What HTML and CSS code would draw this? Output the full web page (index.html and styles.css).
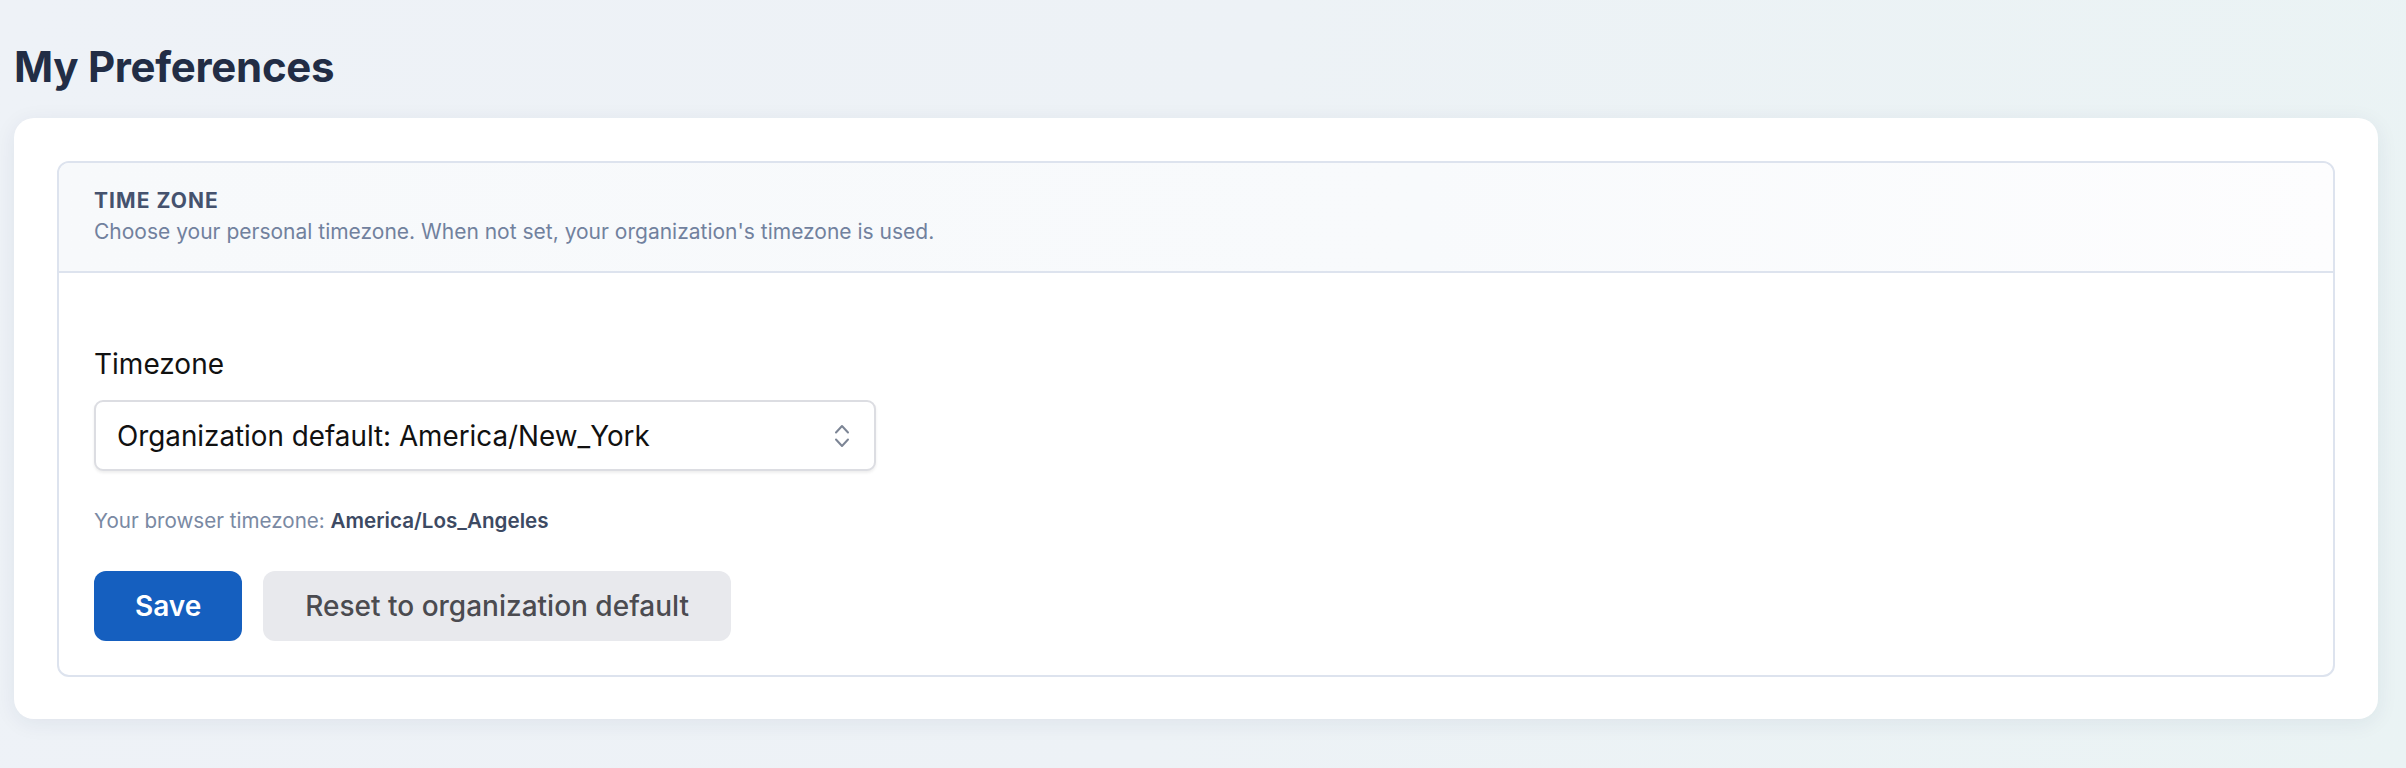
FILE: index.html
```html
<!DOCTYPE html>
<html lang="en">
<head>
	<meta charset="UTF-8">
	<title>My Preferences</title>
	<link rel="stylesheet" href="styles.css">
</head>
<body>
	<div class="page">
		<h1 class="page-title">My Preferences</h1>
		<div class="card">
			<div class="section">
				<div class="section-head">
					<h2 class="section-title">TIME ZONE</h2>
					<p class="section-desc">Choose your personal timezone. When not set, your organization's timezone is used.</p>
				</div>
				<div class="section-body">
					<label class="field-label" for="tz">Timezone</label>
					<div class="select" id="tz">
						<span class="select-value">Organization default: America/New_York</span>
						<svg class="select-arrows" width="16" height="26" viewBox="0 0 16 26" fill="none" stroke="#7c8595" stroke-width="2" stroke-linecap="round" stroke-linejoin="round">
							<path d="M2 9.5 L8 3 L14 9.5"/>
							<path d="M2 16.5 L8 23 L14 16.5"/>
						</svg>
					</div>
					<p class="hint">Your browser timezone: <strong>America/Los_Angeles</strong></p>
					<div class="actions">
						<button class="btn btn-primary">Save</button>
						<button class="btn btn-muted">Reset to organization default</button>
					</div>
				</div>
			</div>
		</div>
	</div>
</body>
</html>
```
FILE: styles.css
```css
*{margin:0;padding:0;box-sizing:border-box;}
body{font-family:Inter,"Noto Sans",sans-serif;background:linear-gradient(100deg,#eef2f7 0%,#edf2f6 50%,#eaf3f4 100%);min-height:768px;color:#111;}
.page{padding:41px 28px 40px 14px;}
.page-title{font-size:42px;line-height:1.25;font-weight:700;color:#222d45;letter-spacing:-0.3px;margin-bottom:24px;}

/* white panel */
.card{background:#fff;border-radius:20px;padding:43px 43px 42px 43px;box-shadow:0 4px 22px rgba(30,45,80,0.07);}
.section{border:2px solid #dde3ee;border-radius:12px;overflow:hidden;}
.section-head{padding:22px 35px 23.5px;background:linear-gradient(90deg,#f7f9fb 0%,#f8fafc 60%,#fdfdfe 100%);border-bottom:2px solid #dde3ee;}
.section-title{font-size:21px;line-height:1.5;font-weight:700;color:#45526e;letter-spacing:0.05em;}
.section-desc{font-size:21px;line-height:1.5;color:#71819e;}
.section-body{padding:70px 35px 34px;}

/* form */
.field-label{display:block;font-size:28px;line-height:1.5;color:#111;margin-bottom:15px;}
.select{width:782px;height:71px;display:flex;align-items:center;justify-content:space-between;padding:0 24px 0 21px;border:2px solid #dcdde2;border-radius:9px;background:#fff;box-shadow:0 2px 3px rgba(0,0,0,0.07);}
.select-value{font-size:27.8px;color:#111;}
.select-arrows{display:block;}
.hint{font-size:20.6px;line-height:1.53;color:#7a89a3;margin-top:34px;}
.hint strong{color:#3d4a63;font-weight:600;}

.actions{display:flex;gap:21px;margin-top:34.5px;}
.btn{height:70px;padding:0 41px;border:0;border-radius:12px;font-family:inherit;font-size:28px;cursor:pointer;}
.btn-primary{background:#155fbf;color:#fff;font-weight:600;}
.btn-muted{background:#e8e9ed;color:#4b4b50;font-weight:500;padding:0 42px;}
```
